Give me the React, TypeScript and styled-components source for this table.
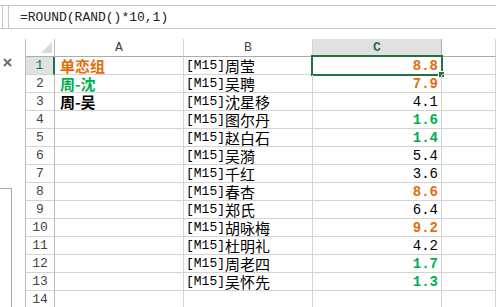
import React from 'react'
import styled, { createGlobalStyle, css } from 'styled-components'

const GREEN = '#217346'
const ORANGE = '#e46c0a'
const BRIGHT_GREEN = '#00b050'

const GlobalStyle = createGlobalStyle`
  html, body {
    margin: 0;
    padding: 0;
    background: #ffffff;
    overflow: hidden;
  }
  body {
    font-family: "Liberation Mono", "Noto Sans CJK SC", monospace;
    color: #000000;
  }
`

const Page = styled.div`
  width: 496px;
  height: 307px;
  display: flex;
  flex-direction: column;
`

const FormulaBar = styled.div`
  margin-top: 5px;
  height: 24px;
  box-sizing: border-box;
  border-top: 1px solid #c6c6c6;
  border-bottom: 1px solid #c6c6c6;
  display: flex;
  gap: 5px;
`

const NameBox = styled.div`
  width: 3px;
  box-sizing: border-box;
  border-right: 1px solid #c6c6c6;
`

const FormulaInput = styled.div`
  flex: 1;
  border-left: 1px solid #c6c6c6;
  padding-left: 11px;
  display: flex;
  align-items: center;
  font-family: "Liberation Mono", monospace;
  font-size: 13px;
  line-height: 1;
  color: #222222;
`

const Main = styled.div`
  margin-top: 10px;
  flex: 1;
  display: flex;
  min-height: 0;
`

const Sidebar = styled.div`
  width: 25px;
  display: flex;
  flex-direction: column;
`

const CloseButton = styled.div`
  margin: 19px 0 0 3px;
  width: 9px;
  height: 9px;
  display: flex;
`

const SidePanel = styled.div`
  margin-top: 121px;
  flex: 1;
  width: 12px;
  box-sizing: border-box;
  border-top: 1px solid #a9a9a9;
  border-right: 1px solid #a9a9a9;
`

const Sheet = styled.div`
  flex: 1;
  border-left: 1px solid #bdbdbd;
  display: grid;
  grid-template-columns: 29px 129px 129px 129px 1fr;
  grid-auto-rows: 18px;
  align-content: start;
  line-height: 1;
`

const Corner = styled.div`
  position: relative;
  box-sizing: border-box;
  border-right: 1px solid #bdbdbd;
  border-bottom: 1px solid #ababab;
  &::after {
    content: '';
    position: absolute;
    right: 2px;
    bottom: 3px;
    width: 0;
    height: 0;
    border-left: 11px solid transparent;
    border-bottom: 11px solid #dadada;
  }
`

const ColHeader = styled.div<{ $active?: boolean }>`
  box-sizing: border-box;
  border-right: 1px solid #d4d4d4;
  border-bottom: 1px solid #ababab;
  display: flex;
  align-items: flex-end;
  justify-content: center;
  padding-bottom: 2px;
  font-family: "Liberation Mono", monospace;
  font-size: 13px;
  color: #444444;
  ${(p) =>
    p.$active &&
    css`
      background: #e1e1e1;
      color: ${GREEN};
      font-weight: 700;
      border-right-color: #ababab;
    `}
`

const RowHeader = styled.div<{ $active?: boolean }>`
  box-sizing: border-box;
  border-right: 1px solid #bdbdbd;
  border-bottom: 1px solid #d4d4d4;
  display: flex;
  align-items: center;
  justify-content: center;
  font-family: "Liberation Mono", monospace;
  font-size: 13px;
  color: #444444;
  ${(p) =>
    p.$active &&
    css`
      background: #e1e1e1;
      color: ${GREEN};
      border-right: 2px solid ${GREEN};
    `}
`

const Cell = styled.div<{ $align?: 'left' | 'right' }>`
  position: relative;
  box-sizing: border-box;
  border-right: 1px solid #d4d4d4;
  border-bottom: 1px solid #d4d4d4;
  display: flex;
  align-items: center;
  justify-content: ${(p) => (p.$align === 'right' ? 'flex-end' : 'flex-start')};
  padding: ${(p) => (p.$align === 'right' ? '0 3px 0 0' : '0 0 0 2px')};
  white-space: nowrap;
`

const toneColor = {
  orange: ORANGE,
  green: BRIGHT_GREEN,
  plain: '#000000',
}

type Tone = keyof typeof toneColor

const GroupText = styled.span<{ $tone: Tone }>`
  padding-left: 3px;
  font-family: "Noto Sans CJK SC", sans-serif;
  font-size: 15px;
  line-height: 1;
  font-weight: 700;
  color: ${(p) => toneColor[p.$tone]};
`

const Tag = styled.span`
  font-family: "Liberation Mono", monospace;
  font-size: 13px;
  line-height: 1;
`

const Name = styled.span`
  font-family: "Noto Sans CJK SC", sans-serif;
  font-size: 15px;
  line-height: 1;
`

const Value = styled.span<{ $tone: Tone }>`
  font-family: "Liberation Mono", monospace;
  font-size: 14px;
  line-height: 1;
  color: ${(p) => toneColor[p.$tone]};
  font-weight: ${(p) => (p.$tone === 'plain' ? 400 : 700)};
`

const Selection = styled.div`
  position: absolute;
  left: -2px;
  top: -2px;
  width: 132px;
  height: 21px;
  box-sizing: border-box;
  border: 2px solid ${GREEN};
  pointer-events: none;
`

const FillHandle = styled.div`
  position: absolute;
  right: -4px;
  bottom: -4px;
  width: 7px;
  height: 7px;
  box-sizing: border-box;
  background: ${GREEN};
  border: 1px solid #ffffff;
`

const groups: { text: string; tone: Tone }[] = [
  { text: '单恋组', tone: 'orange' },
  { text: '周-沈', tone: 'green' },
  { text: '周-吴', tone: 'plain' },
]

const rows: { name: string; value: number }[] = [
  { name: '[M15]周莹', value: 8.8 },
  { name: '[M15]吴聘', value: 7.9 },
  { name: '[M15]沈星移', value: 4.1 },
  { name: '[M15]图尔丹', value: 1.6 },
  { name: '[M15]赵白石', value: 1.4 },
  { name: '[M15]吴漪', value: 5.4 },
  { name: '[M15]千红', value: 3.6 },
  { name: '[M15]春杏', value: 8.6 },
  { name: '[M15]郑氏', value: 6.4 },
  { name: '[M15]胡咏梅', value: 9.2 },
  { name: '[M15]杜明礼', value: 4.2 },
  { name: '[M15]周老四', value: 1.7 },
  { name: '[M15]吴怀先', value: 1.3 },
]

const toneOf = (v: number): Tone => (v >= 7 ? 'orange' : v < 2 ? 'green' : 'plain')

const NameText = ({ name }: { name: string }) => {
  const m = name.match(/^(\[[^\]]+\])(.*)$/)
  if (!m) return <Name>{name}</Name>
  return (
    <>
      <Tag>{m[1]}</Tag>
      <Name>{m[2]}</Name>
    </>
  )
}

export default function App() {
  return (
    <Page>
      <GlobalStyle />
      <FormulaBar>
        <NameBox />
        <FormulaInput>=ROUND(RAND()*10,1)</FormulaInput>
      </FormulaBar>
      <Main>
        <Sidebar>
          <CloseButton>
            <svg width="9" height="9" viewBox="0 0 9 9">
              <path d="M1 1 L8 8 M8 1 L1 8" stroke="#6e6e6e" strokeWidth="2" />
            </svg>
          </CloseButton>
          <SidePanel />
        </Sidebar>
        <Sheet>
          <Corner />
          <ColHeader>A</ColHeader>
          <ColHeader>B</ColHeader>
          <ColHeader $active>C</ColHeader>
          <ColHeader />
          {rows.map((r, i) => (
            <React.Fragment key={i}>
              <RowHeader $active={i === 0}>{i + 1}</RowHeader>
              <Cell>
                {groups[i] && <GroupText $tone={groups[i].tone}>{groups[i].text}</GroupText>}
              </Cell>
              <Cell>
                <NameText name={r.name} />
              </Cell>
              <Cell $align="right">
                <Value $tone={toneOf(r.value)}>{r.value.toFixed(1)}</Value>
                {i === 0 && (
                  <Selection>
                    <FillHandle />
                  </Selection>
                )}
              </Cell>
              <Cell />
            </React.Fragment>
          ))}
          <RowHeader>14</RowHeader>
          <Cell />
          <Cell />
          <Cell />
          <Cell />
        </Sheet>
      </Main>
    </Page>
  )
}
